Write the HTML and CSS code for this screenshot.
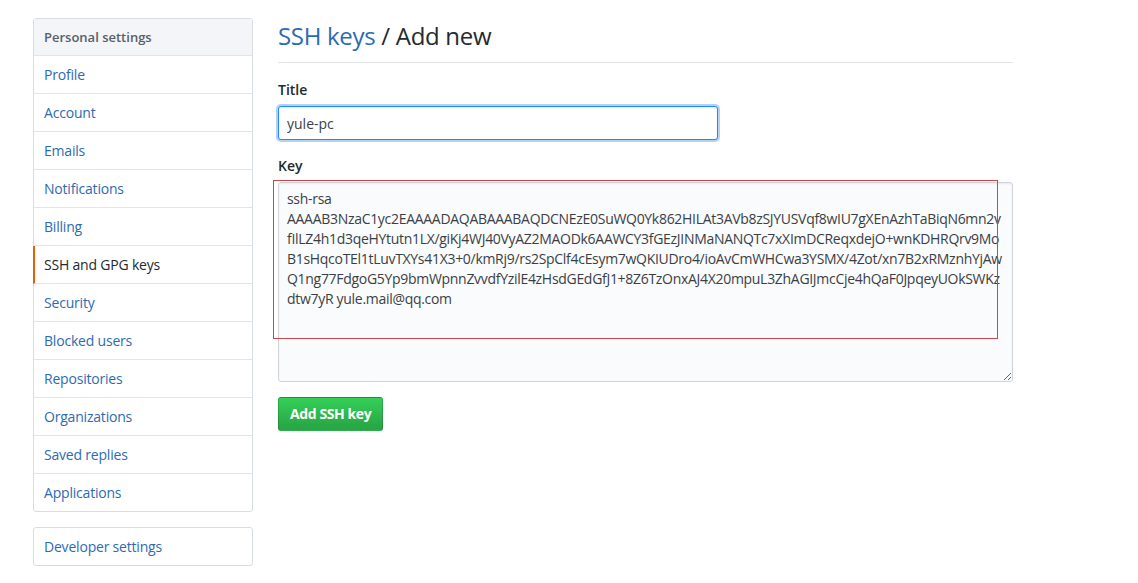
FILE: index.html
```html
<!DOCTYPE html>
<html lang="en">
<head>
<meta charset="utf-8">
<title>SSH keys / Add new</title>
<link rel="stylesheet" href="styles.css">
</head>
<body>
<div class="container">
  <nav class="sidebar">
    <div class="menu">
      <div class="menu-heading">Personal settings</div>
      <a class="menu-item" href="#">Profile</a>
      <a class="menu-item" href="#">Account</a>
      <a class="menu-item" href="#">Emails</a>
      <a class="menu-item" href="#">Notifications</a>
      <a class="menu-item" href="#">Billing</a>
      <a class="menu-item selected" href="#">SSH and GPG keys</a>
      <a class="menu-item" href="#">Security</a>
      <a class="menu-item" href="#">Blocked users</a>
      <a class="menu-item" href="#">Repositories</a>
      <a class="menu-item" href="#">Organizations</a>
      <a class="menu-item" href="#">Saved replies</a>
      <a class="menu-item" href="#">Applications</a>
    </div>
    <div class="menu">
      <a class="menu-item" href="#">Developer settings</a>
    </div>
  </nav>
  <main class="main">
    <div class="subhead">
      <h2 class="subhead-heading"><a href="#">SSH keys</a> / Add new</h2>
    </div>
    <form class="form">
      <div class="form-group">
        <label class="form-label" for="title">Title</label>
        <input class="form-control input-title focus" id="title" type="text" value="yule-pc">
      </div>
      <div class="form-group">
        <label class="form-label" for="key">Key</label>
        <textarea class="form-control key-area" id="key" wrap="off">ssh-rsa
AAAAB3NzaC1yc2EAAAADAQABAAABAQDCNEzE0SuWQ0Yk862HILAt3AVb8zSJYUSVqf8wIU7gXEnAzhTaBiqN6mn2v
fIlLZ4h1d3qeHYtutn1LX/giKj4WJ40VyAZ2MAODk6AAWCY3fGEzJINMaNANQTc7xXImDCReqxdejO+wnKDHRQrv9Mo
B1sHqcoTEl1tLuvTXYs41X3+0/kmRj9/rs2SpClf4cEsym7wQKIUDro4/ioAvCmWHCwa3YSMX/4Zot/xn7B2xRMznhYjAw
Q1ng77FdgoG5Yp9bmWpnnZvvdfYzilE4zHsdGEdGfJ1+8Z6TzOnxAJ4X20mpuL3ZhAGIJmcCje4hQaF0JpqeyUOkSWKz
dtw7yR yule.mail@qq.com</textarea>
      </div>
      <button class="btn-primary" type="button">Add SSH key</button>
    </form>
    <div class="annotation"></div>
  </main>
</div>
</body>
</html>
```

FILE: styles.css
```css
* { box-sizing: border-box; }
html, body { margin: 0; padding: 0; background: #fff; }
body {
  font-family: "Open Sans", "Noto Sans", "DejaVu Sans", sans-serif;
  font-size: 14px;
  line-height: 1.5;
  color: #24292e;
}
a { text-decoration: none; }

.container {
  display: flex;
  gap: 25px;
  width: 980px;
  margin: 18px 0 0 33px;
}

.sidebar { width: 220px; flex: none; display: flex; flex-direction: column; gap: 15px; }
.menu {
  border: 1px solid #d8dde2;
  border-radius: 3px;
  display: flex;
  flex-direction: column;
}
.menu-heading {
  padding: 8px 10px;
  font-size: 13px;
  line-height: 20px;
  font-weight: 600;
  color: #586069;
  background: #f3f5f8;
  border-bottom: 1px solid #e1e4e8;
}
.menu-item {
  display: block;
  padding: 8px 10px 8px 9px;
  line-height: 21px;
  color: #2c6bb3;
  letter-spacing: -0.2px;
  border-bottom: 1px solid #e1e4e8;
  border-left: 2px solid transparent;
  margin-left: -1px;
}
.menu-item:last-child { border-bottom: 0; }
.menu-item.selected {
  color: #24292e;
  border-left-color: #e36209;
}

.main { position: relative; flex: 1; min-width: 0; }
.subhead {
  padding-bottom: 8px;
  margin-bottom: 16px;
  border-bottom: 1px solid #e1e4e8;
}
.subhead-heading {
  margin: 0;
  font-size: 24px;
  line-height: 36px;
  font-weight: 400;
  letter-spacing: -0.3px;
  color: #24292e;
}
.subhead-heading a { color: #2c6bb3; }

.form-group { margin-bottom: 15px; display: flex; flex-direction: column; align-items: flex-start; }
.form-label {
  font-weight: 600;
  line-height: 21px;
  margin-bottom: 6px;
  margin-top: 0;
}
.form-control {
  font-family: inherit;
  font-size: 14px;
  line-height: 20px;
  padding: 6px 8px;
  color: #3a3f44;
  border: 1px solid #d1d5da;
  border-radius: 3px;
  background: #fafbfc;
  box-shadow: inset 0 1px 2px rgba(27,31,35,0.075);
  outline: none;
}
.input-title {
  width: 440px;
  height: 34px;
}
.input-title.focus {
  background: #fff;
  border-color: #2188ff;
  box-shadow: inset 0 1px 2px rgba(27,31,35,0.075), 0 0 0 2px rgba(3,102,214,0.3);
}
.key-area {
  width: 735px;
  height: 200px;
  white-space: pre;
  overflow: hidden;
  resize: vertical;
  letter-spacing: -0.3px;
}

.btn-primary {
  font-family: inherit;
  font-size: 14px;
  font-weight: 700;
  line-height: 20px;
  padding: 6px 11px;
  height: 34px;
  white-space: nowrap;
  letter-spacing: -0.4px;
  color: #fff;
  border: 1px solid rgba(27,31,35,0.2);
  border-radius: 3px;
  background-image: linear-gradient(-180deg, #34d058 0%, #28a745 90%);
  cursor: pointer;
}

.annotation {
  position: absolute;
  left: -5px;
  top: 162px;
  width: 725px;
  height: 159px;
  border: 1px solid #d0454a;
  pointer-events: none;
}
```
